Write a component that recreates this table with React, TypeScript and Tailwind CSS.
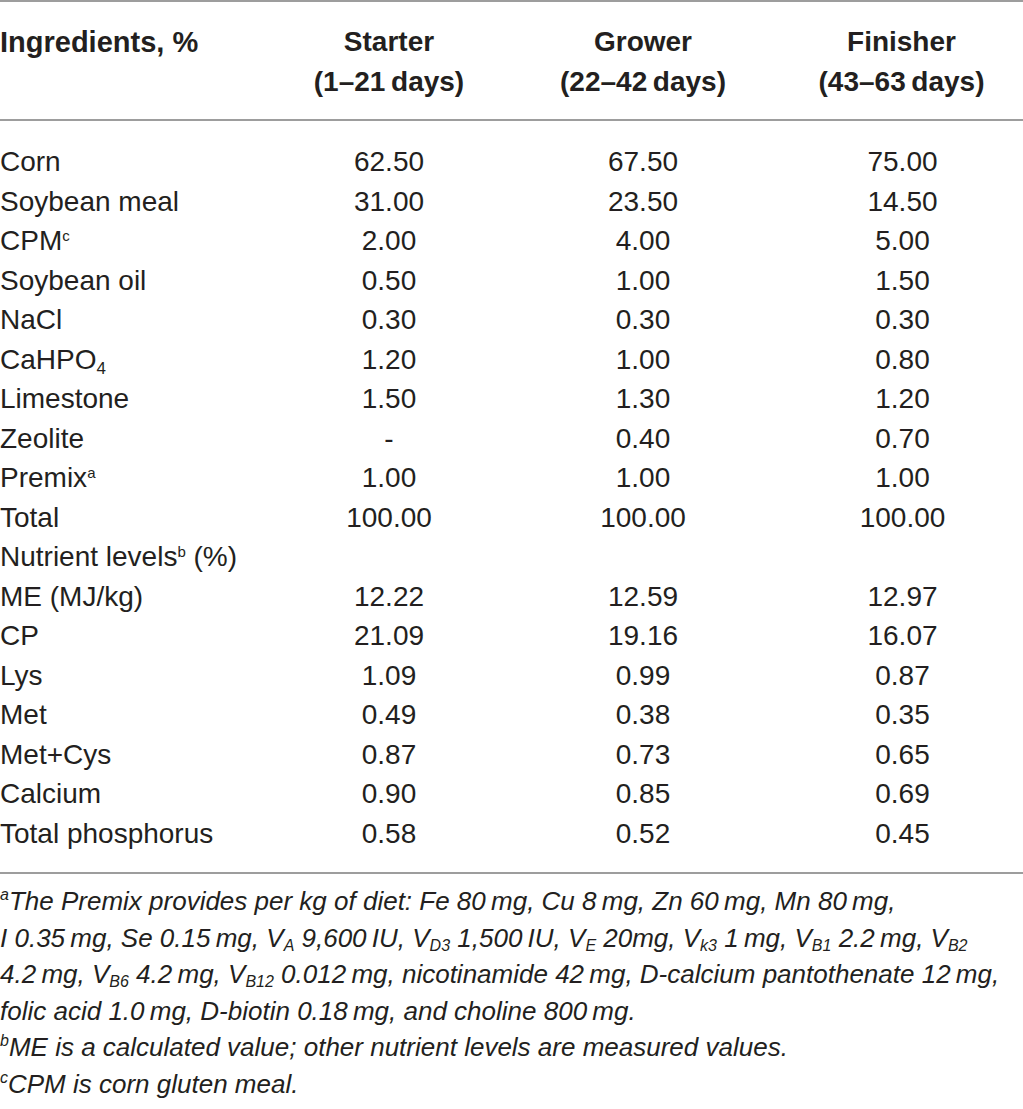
import React from 'react';

type Row = {
  label: React.ReactNode;
  values: string[];
};

const rows: Row[] = [
  { label: 'Corn', values: ['62.50', '67.50', '75.00'] },
  { label: 'Soybean meal', values: ['31.00', '23.50', '14.50'] },
  { label: <>CPM<sup className="text-[15px] top-[-0.6em]">c</sup></>, values: ['2.00', '4.00', '5.00'] },
  { label: 'Soybean oil', values: ['0.50', '1.00', '1.50'] },
  { label: 'NaCl', values: ['0.30', '0.30', '0.30'] },
  { label: <>CaHPO<sub className="text-[17px] bottom-[-0.3em]">4</sub></>, values: ['1.20', '1.00', '0.80'] },
  { label: 'Limestone', values: ['1.50', '1.30', '1.20'] },
  { label: 'Zeolite', values: ['-', '0.40', '0.70'] },
  { label: <>Premix<sup className="text-[15px] top-[-0.6em]">a</sup></>, values: ['1.00', '1.00', '1.00'] },
  { label: 'Total', values: ['100.00', '100.00', '100.00'] },
  { label: <>Nutrient levels<sup className="text-[15px] top-[-0.6em]">b</sup> (%)</>, values: ['', '', ''] },
  { label: 'ME (MJ/kg)', values: ['12.22', '12.59', '12.97'] },
  { label: 'CP', values: ['21.09', '19.16', '16.07'] },
  { label: 'Lys', values: ['1.09', '0.99', '0.87'] },
  { label: 'Met', values: ['0.49', '0.38', '0.35'] },
  { label: 'Met+Cys', values: ['0.87', '0.73', '0.65'] },
  { label: 'Calcium', values: ['0.90', '0.85', '0.69'] },
  { label: 'Total phosphorus', values: ['0.58', '0.52', '0.45'] },
];

// V with an italic subscript, as in the premix footnote
function V({ s }: { s: string }) {
  return (
    <>
      V<sub className="text-[16px] bottom-[-0.25em]">{s}</sub>
    </>
  );
}

const cols = 'grid grid-cols-[262px_254px_254px_1fr]';
const t = '\u2009';

export default function App() {
  return (
    <div className="w-[1023px] min-h-[1109px] bg-white text-[#231f20] font-['Liberation_Sans',Arial,sans-serif]">
      <div className={`${cols} border-t-2 border-b-2 border-[#9d9d9d] pt-[20px] pb-[17px] text-[28px] font-bold leading-[40px]`}>
        <div className="text-[29px]">Ingredients, %</div>
        <div className="text-center">
          Starter
          <br />
          (1–21{t}days)
        </div>
        <div className="text-center">
          Grower
          <br />
          (22–42{t}days)
        </div>
        <div className="text-center pl-[10px]">
          Finisher
          <br />
          (43–63{t}days)
        </div>
      </div>

      <div className="pt-[21px] pb-[19px] text-[28px] leading-[39.5px]">
        {rows.map((row, i) => (
          <div key={i} className={cols}>
            <div className="whitespace-nowrap">{row.label}</div>
            <div className="text-center">{row.values[0]}</div>
            <div className="text-center">{row.values[1]}</div>
            <div className="text-center pl-[12px]">{row.values[2]}</div>
          </div>
        ))}
      </div>

      <div className="border-t-2 border-[#9d9d9d] pt-[9px] text-[26px] leading-[36.5px] italic whitespace-nowrap">
        <div>
          <sup className="text-[16px] top-[-0.6em]">a</sup>The Premix provides per kg of diet: Fe 80{t}mg, Cu 8{t}mg, Zn 60{t}mg, Mn 80{t}mg,
        </div>
        <div>
          I 0.35{t}mg, Se 0.15{t}mg, <V s="A" /> 9,600{t}IU, <V s="D3" /> 1,500{t}IU, <V s="E" /> 20mg, <V s="k3" /> 1{t}mg, <V s="B1" /> 2.2{t}mg, <V s="B2" />
        </div>
        <div>
          4.2{t}mg, <V s="B6" /> 4.2{t}mg, <V s="B12" /> 0.012{t}mg, nicotinamide 42{t}mg, D-calcium pantothenate 12{t}mg,
        </div>
        <div>folic acid 1.0{t}mg, D-biotin 0.18{t}mg, and choline 800{t}mg.</div>
        <div>
          <sup className="text-[16px] top-[-0.6em]">b</sup>ME is a calculated value; other nutrient levels are measured values.
        </div>
        <div>
          <sup className="text-[16px] top-[-0.6em]">c</sup>CPM is corn gluten meal.
        </div>
      </div>
    </div>
  );
}
